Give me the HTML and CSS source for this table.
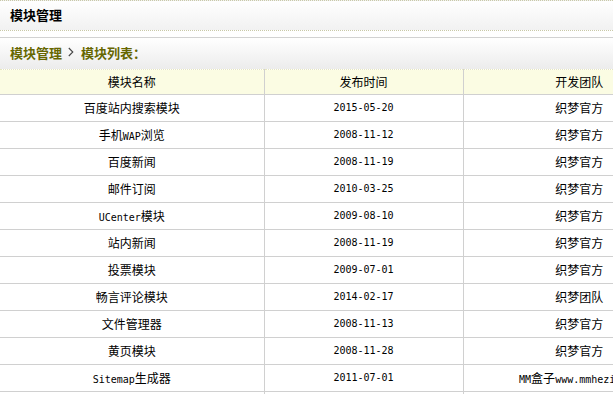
FILE: index.html
```html
<!DOCTYPE html>
<html lang="zh-CN">
<head>
<meta charset="utf-8">
<title>模块管理</title>
<link rel="stylesheet" href="styles.css">
</head>
<body>
<div class="page">
  <div class="titlebar">模块管理</div>
  <div class="crumbbar"><span>模块管理</span><svg class="sep" width="6" height="10" viewBox="0 0 6 10"><polyline points="0.8,1 4.8,5 0.8,9" fill="none" stroke="#444" stroke-width="1.1"/></svg><span>模块列表：</span></div>
  <table class="list">
    <colgroup><col class="c1"><col class="c2"><col class="c3"></colgroup>
    <thead>
      <tr><th>模块名称</th><th>发布时间</th><th>开发团队</th></tr>
    </thead>
    <tbody>
      <tr><td>百度站内搜索模块</td><td class="date">2015-05-20</td><td>织梦官方</td></tr>
      <tr><td>手机<span class="en">WAP</span>浏览</td><td class="date">2008-11-12</td><td>织梦官方</td></tr>
      <tr><td>百度新闻</td><td class="date">2008-11-19</td><td>织梦官方</td></tr>
      <tr><td>邮件订阅</td><td class="date">2010-03-25</td><td>织梦官方</td></tr>
      <tr><td><span class="en">UCenter</span>模块</td><td class="date">2009-08-10</td><td>织梦官方</td></tr>
      <tr><td>站内新闻</td><td class="date">2008-11-19</td><td>织梦官方</td></tr>
      <tr><td>投票模块</td><td class="date">2009-07-01</td><td>织梦官方</td></tr>
      <tr><td>畅言评论模块</td><td class="date">2014-02-17</td><td>织梦团队</td></tr>
      <tr><td>文件管理器</td><td class="date">2008-11-13</td><td>织梦官方</td></tr>
      <tr><td>黄页模块</td><td class="date">2008-11-28</td><td>织梦官方</td></tr>
      <tr><td><span class="en">Sitemap</span>生成器</td><td class="date">2011-07-01</td><td><span class="en">MM</span>盒子<span class="en">www.mmhezi.com</span></td></tr>
      <tr><td>友情链接</td><td class="date">2008-11-19</td><td>织梦官方</td></tr>
    </tbody>
  </table>
</div>
</body>
</html>
```

FILE: styles.css
```css
html, body {
  margin: 0;
  padding: 0;
  overflow: hidden;
  background: #fff;
}
body {
  font-family: "Noto Sans CJK SC", "Liberation Sans", sans-serif;
  font-size: 12px;
  color: #000;
}
.page {
  width: 695px;
}
.titlebar {
  height: 29px;
  line-height: 28px;
  padding-left: 10px;
  font-size: 13px;
  font-weight: bold;
  border-top: 1px dotted #c9c9a8;
  border-bottom: 1px dotted #c9c9a8;
  background: linear-gradient(#ffffff, #f1f1f1);
}
.crumbbar {
  margin-top: 6px;
  padding-left: 10px;
  padding-bottom: 3px;
  box-sizing: border-box;
  height: 32px;
  border-top: 1px solid #d2d2d2;
  background: linear-gradient(#ffffff, #ececec);
  color: #666600;
  font-size: 13px;
  font-weight: bold;
  display: flex;
  align-items: center;
  gap: 7px;
}
.crumbbar .sep {
  margin-left: -1px;
}
.list {
  width: 695px;
  border-collapse: collapse;
  table-layout: fixed;
}
.list .c1 { width: 264px; }
.list .c2 { width: 199px; }
.list .c3 { width: 232px; }
.list th, .list td {
  height: 24px;
  padding: 0 0 2px 0;
  text-align: center;
  white-space: nowrap;
  overflow: visible;
  border-bottom: 1px solid #d0d0d0;
  border-left: 1px solid #d0d0d0;
  font-weight: normal;
}
.list th {
  height: 22px;
  background: #fbfce3;
  border-top: 1px dotted #e6e6c0;
}
.list th:first-child, .list td:first-child {
  border-left: none;
}
.list td.date {
  font-family: "DejaVu Sans Mono", monospace;
  font-size: 10px;
}
.en {
  font-family: "DejaVu Sans Mono", monospace;
  font-size: 10px;
  line-height: 1;
}
```
